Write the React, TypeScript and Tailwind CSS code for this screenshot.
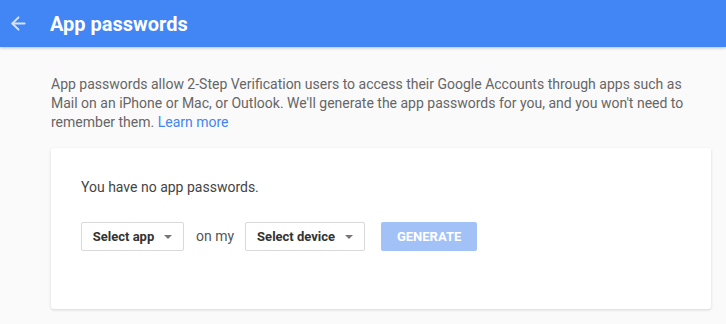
import { ArrowLeft } from "lucide-react";

const font = { fontFamily: "Roboto, 'Liberation Sans', sans-serif" };

const Caret = () => (
  <span className="ml-[10px] inline-block h-0 w-0 border-x-[4px] border-t-[4px] border-x-transparent border-t-[#777]" />
);

const Dropdown = ({ label, width }: { label: string; width: string }) => (
  <button
    className={`flex h-[29px] ${width} items-center justify-center rounded-[2px] border border-[#d9d9d9] bg-white text-[13px] font-bold text-[#333]`}
  >
    {label}
    <Caret />
  </button>
);

export default function App() {
  return (
    <div className="h-[324px] w-[726px] overflow-hidden bg-[#fafafa]" style={font}>
      {/* Header */}
      <header className="relative z-10 flex h-[47px] items-center bg-[#4285f4] shadow-[0_1px_3px_rgba(0,0,0,0.25)]">
        <ArrowLeft size={21} strokeWidth={2.2} className="ml-[8px] text-[#d4e3fc]" />
        <h1 className="ml-[21px] text-[20px] font-bold text-white">App passwords</h1>
      </header>

      {/* Content */}
      <main className="pl-[51px] pr-[15px] pt-[28px]">
        <p className="w-[660px] text-[14px] leading-[19px] text-[#666]">
          App passwords allow 2-Step Verification users to access their Google Accounts through apps such as
          Mail on an iPhone or Mac, or Outlook. We'll generate the app passwords for you, and you won't need to
          remember them. <a className="text-[#4285f4]">Learn more</a>
        </p>

        <section className="mt-[16px] h-[161px] w-[660px] rounded-[3px] bg-white px-[30px] pt-[29px] shadow-[0_1px_3px_rgba(0,0,0,0.15)]">
          <p className="text-[14px] text-[#444]">You have no app passwords.</p>
          <div className="mt-[24px] flex items-center">
            <Dropdown label="Select app" width="w-[103px]" />
            <span className="ml-[12px] mr-[11px] text-[14px] text-[#555]">on my</span>
            <Dropdown label="Select device" width="w-[120px]" />
            <button className="ml-[16px] h-[29px] w-[96px] rounded-[2px] bg-[#a1c1f7] text-[13px] font-bold uppercase text-white">
              Generate
            </button>
          </div>
        </section>
      </main>
    </div>
  );
}
